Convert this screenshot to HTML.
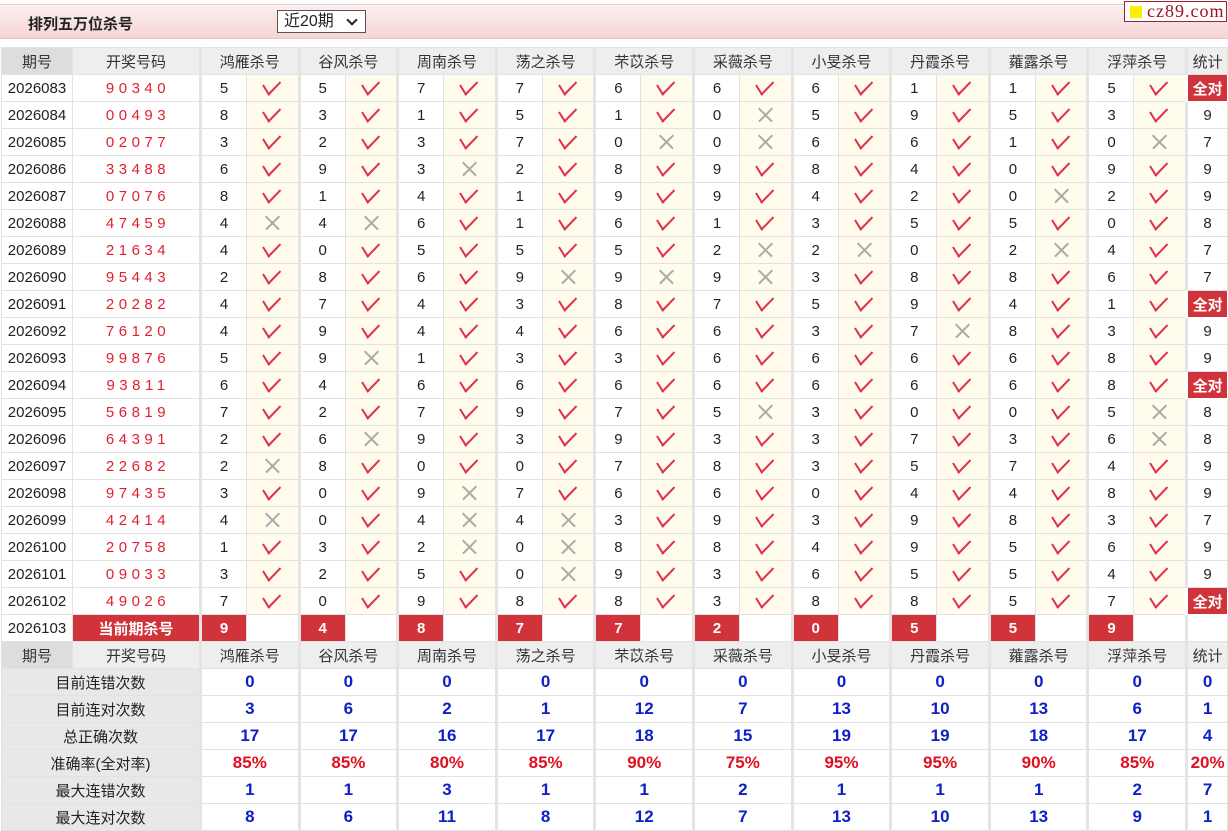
<!DOCTYPE html>
<html><head><meta charset="utf-8">
<style>
*{box-sizing:border-box;margin:0;padding:0}
body{width:1228px;height:829px;overflow:hidden;background:#fff;font-family:"Liberation Sans","Noto Sans CJK SC",sans-serif;color:#222;position:relative}
.bar{position:absolute;left:0;top:4px;width:1228px;height:35px;background:linear-gradient(#fdf0f0,#f4d4d4);border-top:1px solid #e8d0d0;border-bottom:1px solid #e6c4c4}
.bar .t{position:absolute;left:28px;top:8px;font-size:15px;font-weight:bold;color:#222}
.sel{position:absolute;left:277px;top:5px;width:89px;height:23px;border:1px solid #555;background:#fff;font-size:16px;padding-left:6px;line-height:21px}
.sel:after{content:"";position:absolute;right:9px;top:5px;width:6px;height:6px;border-right:2px solid #222;border-bottom:2px solid #222;transform:rotate(45deg)}
.logo{position:absolute;left:1124px;top:1px;width:103px;height:21px;background:#fff;border:1px solid #a02030;font-family:"Liberation Serif",serif;font-size:18px;color:#a01020;line-height:19px;padding-left:22px;letter-spacing:1px;z-index:2}
.logo:before{content:"";position:absolute;left:5px;top:4px;width:12px;height:12px;background:#ffee00}
table{position:absolute;left:1px;top:47px;border-collapse:collapse;table-layout:fixed;width:1226px}
td{height:27px;border:1px solid #e2e2e2;text-align:center;font-size:15px;padding:0;white-space:nowrap;overflow:hidden}
.h td{background:#eee;color:#333}
.h td.q{background:#ddd}
td.n{border-left:3px solid #e4e4e4}
td.c{background:#fffcee;position:relative}
td.o{color:#e02030;letter-spacing:4.5px;padding-left:4px}
td.c.y:before{content:"";position:absolute;left:16px;top:9px;width:12px;height:2px;background:#e0304a;transform:rotate(58deg);transform-origin:left center}
td.c.y:after{content:"";position:absolute;left:21px;top:18.5px;width:18px;height:2px;background:#e0304a;transform:rotate(-46deg);transform-origin:left center}
td.c.x:before,td.c.x:after{content:"";position:absolute;left:16px;top:12px;width:19px;height:1.5px;background:#aaa;transform:rotate(45deg)}
td.c.x:after{transform:rotate(-45deg)}
td.a{background:#d0343a;color:#fff;font-weight:bold;border-color:#fff}
td.r{background:#d0343a;color:#fff;font-weight:bold}
td.w{background:#fff}
td.l{background:#e8e8e8;color:#222}
td.b{color:#1020c8;font-weight:bold;font-size:17px;border-left:3px solid #e4e4e4}
td.p{color:#e01020;font-weight:bold;font-size:17px;border-left:3px solid #e4e4e4}
</style></head><body>
<div class="bar"><div class="t">排列五万位杀号</div><div class="sel">近20期</div></div>
<div class="logo">cz89.com</div>
<table>
<colgroup><col style="width:71px"><col style="width:128px"><col style="width:46px"><col style="width:52.6px"><col style="width:46px"><col style="width:52.6px"><col style="width:46px"><col style="width:52.6px"><col style="width:46px"><col style="width:52.6px"><col style="width:46px"><col style="width:52.6px"><col style="width:46px"><col style="width:52.6px"><col style="width:46px"><col style="width:52.6px"><col style="width:46px"><col style="width:52.6px"><col style="width:46px"><col style="width:52.6px"><col style="width:46px"><col style="width:52.6px"><col style="width:41px"></colgroup>
<tr class="h"><td class="q">期号</td><td>开奖号码</td><td colspan="2" class="n">鸿雁杀号</td><td colspan="2" class="n">谷风杀号</td><td colspan="2" class="n">周南杀号</td><td colspan="2" class="n">荡之杀号</td><td colspan="2" class="n">芣苡杀号</td><td colspan="2" class="n">采薇杀号</td><td colspan="2" class="n">小旻杀号</td><td colspan="2" class="n">丹霞杀号</td><td colspan="2" class="n">蕹露杀号</td><td colspan="2" class="n">浮萍杀号</td><td class="n">统计</td></tr>
<tr><td>2026083</td><td class="o">90340</td><td class="n">5</td><td class="c y"></td><td class="n">5</td><td class="c y"></td><td class="n">7</td><td class="c y"></td><td class="n">7</td><td class="c y"></td><td class="n">6</td><td class="c y"></td><td class="n">6</td><td class="c y"></td><td class="n">6</td><td class="c y"></td><td class="n">1</td><td class="c y"></td><td class="n">1</td><td class="c y"></td><td class="n">5</td><td class="c y"></td><td class="n a">全对</td></tr>
<tr><td>2026084</td><td class="o">00493</td><td class="n">8</td><td class="c y"></td><td class="n">3</td><td class="c y"></td><td class="n">1</td><td class="c y"></td><td class="n">5</td><td class="c y"></td><td class="n">1</td><td class="c y"></td><td class="n">0</td><td class="c x"></td><td class="n">5</td><td class="c y"></td><td class="n">9</td><td class="c y"></td><td class="n">5</td><td class="c y"></td><td class="n">3</td><td class="c y"></td><td class="n">9</td></tr>
<tr><td>2026085</td><td class="o">02077</td><td class="n">3</td><td class="c y"></td><td class="n">2</td><td class="c y"></td><td class="n">3</td><td class="c y"></td><td class="n">7</td><td class="c y"></td><td class="n">0</td><td class="c x"></td><td class="n">0</td><td class="c x"></td><td class="n">6</td><td class="c y"></td><td class="n">6</td><td class="c y"></td><td class="n">1</td><td class="c y"></td><td class="n">0</td><td class="c x"></td><td class="n">7</td></tr>
<tr><td>2026086</td><td class="o">33488</td><td class="n">6</td><td class="c y"></td><td class="n">9</td><td class="c y"></td><td class="n">3</td><td class="c x"></td><td class="n">2</td><td class="c y"></td><td class="n">8</td><td class="c y"></td><td class="n">9</td><td class="c y"></td><td class="n">8</td><td class="c y"></td><td class="n">4</td><td class="c y"></td><td class="n">0</td><td class="c y"></td><td class="n">9</td><td class="c y"></td><td class="n">9</td></tr>
<tr><td>2026087</td><td class="o">07076</td><td class="n">8</td><td class="c y"></td><td class="n">1</td><td class="c y"></td><td class="n">4</td><td class="c y"></td><td class="n">1</td><td class="c y"></td><td class="n">9</td><td class="c y"></td><td class="n">9</td><td class="c y"></td><td class="n">4</td><td class="c y"></td><td class="n">2</td><td class="c y"></td><td class="n">0</td><td class="c x"></td><td class="n">2</td><td class="c y"></td><td class="n">9</td></tr>
<tr><td>2026088</td><td class="o">47459</td><td class="n">4</td><td class="c x"></td><td class="n">4</td><td class="c x"></td><td class="n">6</td><td class="c y"></td><td class="n">1</td><td class="c y"></td><td class="n">6</td><td class="c y"></td><td class="n">1</td><td class="c y"></td><td class="n">3</td><td class="c y"></td><td class="n">5</td><td class="c y"></td><td class="n">5</td><td class="c y"></td><td class="n">0</td><td class="c y"></td><td class="n">8</td></tr>
<tr><td>2026089</td><td class="o">21634</td><td class="n">4</td><td class="c y"></td><td class="n">0</td><td class="c y"></td><td class="n">5</td><td class="c y"></td><td class="n">5</td><td class="c y"></td><td class="n">5</td><td class="c y"></td><td class="n">2</td><td class="c x"></td><td class="n">2</td><td class="c x"></td><td class="n">0</td><td class="c y"></td><td class="n">2</td><td class="c x"></td><td class="n">4</td><td class="c y"></td><td class="n">7</td></tr>
<tr><td>2026090</td><td class="o">95443</td><td class="n">2</td><td class="c y"></td><td class="n">8</td><td class="c y"></td><td class="n">6</td><td class="c y"></td><td class="n">9</td><td class="c x"></td><td class="n">9</td><td class="c x"></td><td class="n">9</td><td class="c x"></td><td class="n">3</td><td class="c y"></td><td class="n">8</td><td class="c y"></td><td class="n">8</td><td class="c y"></td><td class="n">6</td><td class="c y"></td><td class="n">7</td></tr>
<tr><td>2026091</td><td class="o">20282</td><td class="n">4</td><td class="c y"></td><td class="n">7</td><td class="c y"></td><td class="n">4</td><td class="c y"></td><td class="n">3</td><td class="c y"></td><td class="n">8</td><td class="c y"></td><td class="n">7</td><td class="c y"></td><td class="n">5</td><td class="c y"></td><td class="n">9</td><td class="c y"></td><td class="n">4</td><td class="c y"></td><td class="n">1</td><td class="c y"></td><td class="n a">全对</td></tr>
<tr><td>2026092</td><td class="o">76120</td><td class="n">4</td><td class="c y"></td><td class="n">9</td><td class="c y"></td><td class="n">4</td><td class="c y"></td><td class="n">4</td><td class="c y"></td><td class="n">6</td><td class="c y"></td><td class="n">6</td><td class="c y"></td><td class="n">3</td><td class="c y"></td><td class="n">7</td><td class="c x"></td><td class="n">8</td><td class="c y"></td><td class="n">3</td><td class="c y"></td><td class="n">9</td></tr>
<tr><td>2026093</td><td class="o">99876</td><td class="n">5</td><td class="c y"></td><td class="n">9</td><td class="c x"></td><td class="n">1</td><td class="c y"></td><td class="n">3</td><td class="c y"></td><td class="n">3</td><td class="c y"></td><td class="n">6</td><td class="c y"></td><td class="n">6</td><td class="c y"></td><td class="n">6</td><td class="c y"></td><td class="n">6</td><td class="c y"></td><td class="n">8</td><td class="c y"></td><td class="n">9</td></tr>
<tr><td>2026094</td><td class="o">93811</td><td class="n">6</td><td class="c y"></td><td class="n">4</td><td class="c y"></td><td class="n">6</td><td class="c y"></td><td class="n">6</td><td class="c y"></td><td class="n">6</td><td class="c y"></td><td class="n">6</td><td class="c y"></td><td class="n">6</td><td class="c y"></td><td class="n">6</td><td class="c y"></td><td class="n">6</td><td class="c y"></td><td class="n">8</td><td class="c y"></td><td class="n a">全对</td></tr>
<tr><td>2026095</td><td class="o">56819</td><td class="n">7</td><td class="c y"></td><td class="n">2</td><td class="c y"></td><td class="n">7</td><td class="c y"></td><td class="n">9</td><td class="c y"></td><td class="n">7</td><td class="c y"></td><td class="n">5</td><td class="c x"></td><td class="n">3</td><td class="c y"></td><td class="n">0</td><td class="c y"></td><td class="n">0</td><td class="c y"></td><td class="n">5</td><td class="c x"></td><td class="n">8</td></tr>
<tr><td>2026096</td><td class="o">64391</td><td class="n">2</td><td class="c y"></td><td class="n">6</td><td class="c x"></td><td class="n">9</td><td class="c y"></td><td class="n">3</td><td class="c y"></td><td class="n">9</td><td class="c y"></td><td class="n">3</td><td class="c y"></td><td class="n">3</td><td class="c y"></td><td class="n">7</td><td class="c y"></td><td class="n">3</td><td class="c y"></td><td class="n">6</td><td class="c x"></td><td class="n">8</td></tr>
<tr><td>2026097</td><td class="o">22682</td><td class="n">2</td><td class="c x"></td><td class="n">8</td><td class="c y"></td><td class="n">0</td><td class="c y"></td><td class="n">0</td><td class="c y"></td><td class="n">7</td><td class="c y"></td><td class="n">8</td><td class="c y"></td><td class="n">3</td><td class="c y"></td><td class="n">5</td><td class="c y"></td><td class="n">7</td><td class="c y"></td><td class="n">4</td><td class="c y"></td><td class="n">9</td></tr>
<tr><td>2026098</td><td class="o">97435</td><td class="n">3</td><td class="c y"></td><td class="n">0</td><td class="c y"></td><td class="n">9</td><td class="c x"></td><td class="n">7</td><td class="c y"></td><td class="n">6</td><td class="c y"></td><td class="n">6</td><td class="c y"></td><td class="n">0</td><td class="c y"></td><td class="n">4</td><td class="c y"></td><td class="n">4</td><td class="c y"></td><td class="n">8</td><td class="c y"></td><td class="n">9</td></tr>
<tr><td>2026099</td><td class="o">42414</td><td class="n">4</td><td class="c x"></td><td class="n">0</td><td class="c y"></td><td class="n">4</td><td class="c x"></td><td class="n">4</td><td class="c x"></td><td class="n">3</td><td class="c y"></td><td class="n">9</td><td class="c y"></td><td class="n">3</td><td class="c y"></td><td class="n">9</td><td class="c y"></td><td class="n">8</td><td class="c y"></td><td class="n">3</td><td class="c y"></td><td class="n">7</td></tr>
<tr><td>2026100</td><td class="o">20758</td><td class="n">1</td><td class="c y"></td><td class="n">3</td><td class="c y"></td><td class="n">2</td><td class="c x"></td><td class="n">0</td><td class="c x"></td><td class="n">8</td><td class="c y"></td><td class="n">8</td><td class="c y"></td><td class="n">4</td><td class="c y"></td><td class="n">9</td><td class="c y"></td><td class="n">5</td><td class="c y"></td><td class="n">6</td><td class="c y"></td><td class="n">9</td></tr>
<tr><td>2026101</td><td class="o">09033</td><td class="n">3</td><td class="c y"></td><td class="n">2</td><td class="c y"></td><td class="n">5</td><td class="c y"></td><td class="n">0</td><td class="c x"></td><td class="n">9</td><td class="c y"></td><td class="n">3</td><td class="c y"></td><td class="n">6</td><td class="c y"></td><td class="n">5</td><td class="c y"></td><td class="n">5</td><td class="c y"></td><td class="n">4</td><td class="c y"></td><td class="n">9</td></tr>
<tr><td>2026102</td><td class="o">49026</td><td class="n">7</td><td class="c y"></td><td class="n">0</td><td class="c y"></td><td class="n">9</td><td class="c y"></td><td class="n">8</td><td class="c y"></td><td class="n">8</td><td class="c y"></td><td class="n">3</td><td class="c y"></td><td class="n">8</td><td class="c y"></td><td class="n">8</td><td class="c y"></td><td class="n">5</td><td class="c y"></td><td class="n">7</td><td class="c y"></td><td class="n a">全对</td></tr>
<tr><td>2026103</td><td class="r">当前期杀号</td><td class="n r">9</td><td class="w"></td><td class="n r">4</td><td class="w"></td><td class="n r">8</td><td class="w"></td><td class="n r">7</td><td class="w"></td><td class="n r">7</td><td class="w"></td><td class="n r">2</td><td class="w"></td><td class="n r">0</td><td class="w"></td><td class="n r">5</td><td class="w"></td><td class="n r">5</td><td class="w"></td><td class="n r">9</td><td class="w"></td><td class="n w"></td></tr>
<tr class="h"><td class="q">期号</td><td>开奖号码</td><td colspan="2" class="n">鸿雁杀号</td><td colspan="2" class="n">谷风杀号</td><td colspan="2" class="n">周南杀号</td><td colspan="2" class="n">荡之杀号</td><td colspan="2" class="n">芣苡杀号</td><td colspan="2" class="n">采薇杀号</td><td colspan="2" class="n">小旻杀号</td><td colspan="2" class="n">丹霞杀号</td><td colspan="2" class="n">蕹露杀号</td><td colspan="2" class="n">浮萍杀号</td><td class="n">统计</td></tr>
<tr><td colspan="2" class="l">目前连错次数</td><td colspan="2" class="b">0</td><td colspan="2" class="b">0</td><td colspan="2" class="b">0</td><td colspan="2" class="b">0</td><td colspan="2" class="b">0</td><td colspan="2" class="b">0</td><td colspan="2" class="b">0</td><td colspan="2" class="b">0</td><td colspan="2" class="b">0</td><td colspan="2" class="b">0</td><td class="b">0</td></tr>
<tr><td colspan="2" class="l">目前连对次数</td><td colspan="2" class="b">3</td><td colspan="2" class="b">6</td><td colspan="2" class="b">2</td><td colspan="2" class="b">1</td><td colspan="2" class="b">12</td><td colspan="2" class="b">7</td><td colspan="2" class="b">13</td><td colspan="2" class="b">10</td><td colspan="2" class="b">13</td><td colspan="2" class="b">6</td><td class="b">1</td></tr>
<tr><td colspan="2" class="l">总正确次数</td><td colspan="2" class="b">17</td><td colspan="2" class="b">17</td><td colspan="2" class="b">16</td><td colspan="2" class="b">17</td><td colspan="2" class="b">18</td><td colspan="2" class="b">15</td><td colspan="2" class="b">19</td><td colspan="2" class="b">19</td><td colspan="2" class="b">18</td><td colspan="2" class="b">17</td><td class="b">4</td></tr>
<tr><td colspan="2" class="l">准确率(全对率)</td><td colspan="2" class="p">85%</td><td colspan="2" class="p">85%</td><td colspan="2" class="p">80%</td><td colspan="2" class="p">85%</td><td colspan="2" class="p">90%</td><td colspan="2" class="p">75%</td><td colspan="2" class="p">95%</td><td colspan="2" class="p">95%</td><td colspan="2" class="p">90%</td><td colspan="2" class="p">85%</td><td class="p">20%</td></tr>
<tr><td colspan="2" class="l">最大连错次数</td><td colspan="2" class="b">1</td><td colspan="2" class="b">1</td><td colspan="2" class="b">3</td><td colspan="2" class="b">1</td><td colspan="2" class="b">1</td><td colspan="2" class="b">2</td><td colspan="2" class="b">1</td><td colspan="2" class="b">1</td><td colspan="2" class="b">1</td><td colspan="2" class="b">2</td><td class="b">7</td></tr>
<tr><td colspan="2" class="l">最大连对次数</td><td colspan="2" class="b">8</td><td colspan="2" class="b">6</td><td colspan="2" class="b">11</td><td colspan="2" class="b">8</td><td colspan="2" class="b">12</td><td colspan="2" class="b">7</td><td colspan="2" class="b">13</td><td colspan="2" class="b">10</td><td colspan="2" class="b">13</td><td colspan="2" class="b">9</td><td class="b">1</td></tr>
</table>
</body></html>
